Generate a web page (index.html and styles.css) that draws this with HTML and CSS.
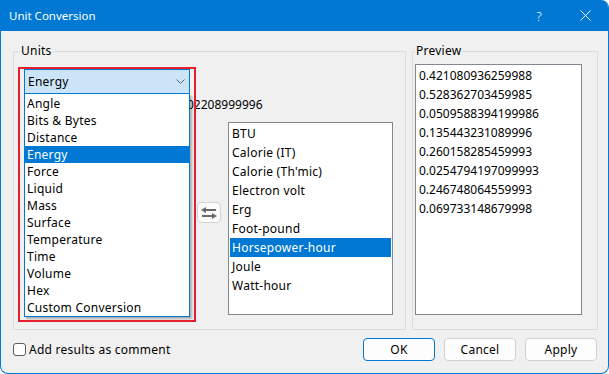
FILE: index.html
```html
<!DOCTYPE html>
<html lang="en">

<head>
    <meta charset="UTF-8">
    <meta name="viewport" content="width=device-width, initial-scale=1.0">
    <title>Unit Conversion</title>
    <link rel="stylesheet" href="styles.css">
</head>

<body>

    <div class="window">

        <!-- Title bar -->
        <div class="titlebar">
            <span class="title">Unit Conversion</span>
            <span class="cap-btn help">?</span>
            <span class="cap-btn close">
                <svg width="11" height="11" viewBox="0 0 11 11">
                    <path d="M0.5 0.5 L10.5 10.5 M10.5 0.5 L0.5 10.5" stroke="#fff" stroke-width="1" fill="none" />
                </svg>
            </span>
        </div>

        <div class="content">
            <div class="groups">

                <!-- Units group -->
                <fieldset class="group units">
                    <legend>Units</legend>

                    <div class="combo-wrap">
                        <div class="combo">
                            <span>Energy</span>
                            <svg width="9" height="5" viewBox="0 0 9 5">
                                <path d="M0.5 0.5 L4.5 4.5 L8.5 0.5" stroke="#606060" stroke-width="1" fill="none" />
                            </svg>
                        </div>
                        <ul class="dropdown">
                            <li>Angle</li>
                            <li>Bits &amp; Bytes</li>
                            <li>Distance</li>
                            <li class="selected">Energy</li>
                            <li>Force</li>
                            <li>Liquid</li>
                            <li>Mass</li>
                            <li>Surface</li>
                            <li>Temperature</li>
                            <li>Time</li>
                            <li>Volume</li>
                            <li>Hex</li>
                            <li>Custom Conversion</li>
                        </ul>
                        <div class="highlight"></div>
                    </div>

                    <div class="result">02208999996</div>

                    <div class="lists">
                        <!-- source list sits under the open dropdown -->
                        <ul class="listbox from"></ul>
                        <button class="swap">
                            <svg width="16" height="12" viewBox="0 0 16 12">
                                <path d="M0 3 L5 0 L5 6 Z" fill="#6a6a6a" />
                                <rect x="4" y="2" width="11" height="2" fill="#6a6a6a" />
                                <path d="M16 9 L11 6 L11 12 Z" fill="#6a6a6a" />
                                <rect x="1" y="8" width="11" height="2" fill="#6a6a6a" />
                            </svg>
                        </button>
                        <ul class="listbox to">
                            <li>BTU</li>
                            <li>Calorie (IT)</li>
                            <li>Calorie (Th'mic)</li>
                            <li>Electron volt</li>
                            <li>Erg</li>
                            <li>Foot-pound</li>
                            <li class="selected">Horsepower-hour</li>
                            <li>Joule</li>
                            <li>Watt-hour</li>
                        </ul>
                    </div>
                </fieldset>

                <!-- Preview group -->
                <fieldset class="group preview">
                    <legend>Preview</legend>
                    <ul class="listbox values">
                        <li>0.421080936259988</li>
                        <li>0.528362703459985</li>
                        <li>0.0509588394199986</li>
                        <li>0.135443231089996</li>
                        <li>0.260158285459993</li>
                        <li>0.0254794197099993</li>
                        <li>0.246748064559993</li>
                        <li>0.069733148679998</li>
                    </ul>
                </fieldset>
            </div>

            <!-- Footer -->
            <div class="footer">
                <label class="check">
                    <span class="box"></span>
                    <span>Add results as comment</span>
                </label>
                <div class="buttons">
                    <button class="btn default">OK</button>
                    <button class="btn">Cancel</button>
                    <button class="btn">Apply</button>
                </div>
            </div>
        </div>
    </div>

</body>

</html>
```

FILE: styles.css
```css
* {
    box-sizing: border-box;
}

body {
    margin: 0;
    background: #fff;
    font-family: "Noto Sans", "Segoe UI", sans-serif;
    font-size: 12px;
    letter-spacing: 0.25px;
    color: #000;
}

ul {
    list-style: none;
    margin: 0;
    padding: 0;
}

.window {
    width: 609px;
    height: 374px;
    border: 1px solid #0078d4;
    border-top: 0;
    border-radius: 0 8px 8px 8px;
    background: #f0f0f0;
    display: flex;
    flex-direction: column;
    overflow: hidden;
}

/* ---------- title bar ---------- */
.titlebar {
    height: 31px;
    background: #0078d4;
    color: #fff;
    display: flex;
    align-items: center;
    padding-left: 8px;
}

.title {
    flex: 1;
    font-size: 11.5px;
    letter-spacing: 0;
}

.cap-btn {
    width: 46px;
    height: 31px;
    display: flex;
    align-items: center;
    justify-content: center;
}

.help {
    font-size: 13px;
    font-weight: 300;
    letter-spacing: 0;
}

/* ---------- content ---------- */
.content {
    flex: 1;
    padding: 12px 10px 0 12px;
}

.groups {
    display: flex;
    gap: 6px;
}

.group {
    margin: 0;
    min-width: 0;
    height: 287px;
    border: 1px solid #dcdcdc;
}

.group legend {
    padding: 0 1px;
    line-height: 16px;
    margin-left: -4px;
}

.units {
    width: 393px;
    padding: 10px 12px 0 10px;
}

.preview {
    width: 186px;
    padding: 5px 0 0 2px;
}

.preview legend {
    margin-left: 0;
}

/* ---------- combo box with open list ---------- */
.combo-wrap {
    position: relative;
    width: 166px;
}

.combo {
    height: 25px;
    background: #cce4f7;
    border: 1px solid #0078d4;
    display: flex;
    align-items: center;
    justify-content: space-between;
    padding: 0 4px 0 3px;
}

.dropdown {
    position: absolute;
    top: 100%;
    left: 0;
    width: 166px;
    background: #fff;
    border: 1px solid #0078d4;
    border-top: 0;
    padding-top: 1px;
    box-shadow: 2px 2px 2px rgba(0, 0, 0, 0.28);
    z-index: 2;
}

.dropdown li {
    height: 17px;
    line-height: 17px;
    padding-left: 2px;
}

.dropdown .selected {
    background: #0078d4;
    color: #fff;
}

.highlight {
    position: absolute;
    left: -6px;
    top: -2px;
    width: 178px;
    height: 255px;
    border: 2px solid #e5202e;
    z-index: 3;
}

.result {
    margin-top: 3px;
    padding-left: 163px;
    line-height: 16px;
    white-space: nowrap;
    letter-spacing: 0;
}

/* ---------- list boxes ---------- */
.lists {
    display: flex;
    align-items: flex-start;
    margin-top: 9px;
}

.listbox {
    background: #fff;
    border: 1px solid #828790;
    padding: 1px;
    height: 193px;
}

.listbox li {
    height: 19px;
    line-height: 19px;
    padding-left: 2px;
    white-space: nowrap;
}

.listbox .selected {
    background: #0078d4;
    color: #fff;
}

.from {
    width: 166px;
}

.to {
    width: 165px;
    margin-left: 7px;
}

.values {
    width: 167px;
    height: 251px;
    letter-spacing: 0;
}

.swap {
    width: 24px;
    height: 21px;
    margin: 80px 0 0 7px;
    padding: 0;
    background: #fbfbfb;
    border: 1px solid #d4d4d4;
    border-radius: 4px;
    display: flex;
    align-items: center;
    justify-content: center;
}

/* ---------- footer ---------- */
.footer {
    display: flex;
    align-items: center;
    margin-top: 8px;
    height: 23px;
}

.check {
    display: flex;
    align-items: center;
    gap: 3px;
}

.check .box {
    width: 13px;
    height: 13px;
    border: 1px solid #5c5c5c;
    border-radius: 3px;
    background: #fff;
}

.buttons {
    margin-left: auto;
    margin-right: 1px;
    display: flex;
    gap: 9px;
}

.btn {
    width: 72px;
    height: 23px;
    font-family: inherit;
    font-size: 12px;
    letter-spacing: 0.25px;
    color: #000;
    background: #fdfdfd;
    border: 1px solid #d0d0d0;
    border-radius: 4px;
    padding: 0;
}

.btn.default {
    border-color: #0078d4;
}
```
